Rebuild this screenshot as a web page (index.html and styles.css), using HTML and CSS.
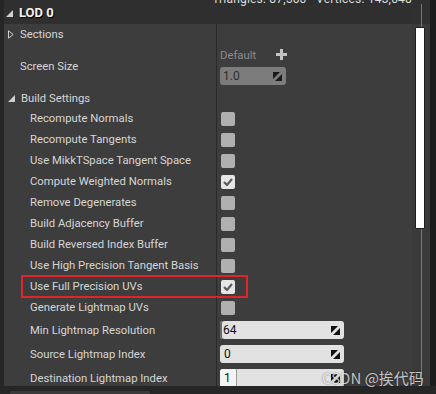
FILE: index.html
```html
<!DOCTYPE html>
<html lang="en">
<head>
  <meta charset="UTF-8" />
  <title>LOD 0 Details</title>
  <link rel="stylesheet" href="styles.css">
</head>
<body>

<div class="frame">
  <div class="panel">

    <!-- LOD header -->
    <div class="lod-header">
      <div class="lod-title">
        <svg class="tri" width="7" height="7" viewBox="0 0 7 7"><path d="M7 0 V7 H0 Z" fill="#d0d0d0"/></svg>
        <span>LOD 0</span>
      </div>
      <div class="lod-stats">Triangles: 87,500&nbsp;&nbsp;&nbsp;Vertices: 143,048</div>
    </div>

    <!-- Property rows -->
    <div class="rows">
      <div class="row row-sm">
        <div class="name top">
          <svg class="tri" width="6" height="9" viewBox="0 0 6 9"><path d="M0.5 0.8 L5.2 4.5 L0.5 8.2 Z" fill="none" stroke="#cfcfcf" stroke-width="1"/></svg>
          <span>Sections</span>
        </div>
        <div class="value"></div>
      </div>

      <div class="row row-tall">
        <div class="name top plain"><span>Screen Size</span></div>
        <div class="value stack">
          <div class="default-line">
            <span>Default</span>
            <svg class="plus" width="11" height="11" viewBox="0 0 11 11"><path d="M4 0 H7 V4 H11 V7 H7 V11 H4 V7 H0 V4 H4 Z" fill="#c4c4c4"/></svg>
          </div>
          <div class="num num-grey">
            <span>1.0</span>
            <svg class="grip" width="9" height="9" viewBox="0 0 9 9"><path d="M0 0 H7 L0 7 Z M9 2 V9 H2 Z" fill="#1a1a1a"/></svg>
          </div>
        </div>
      </div>

      <div class="row row-cat">
        <div class="name top">
          <svg class="tri" width="7" height="7" viewBox="0 0 7 7"><path d="M7 0 V7 H0 Z" fill="#cfcfcf"/></svg>
          <span>Build Settings</span>
        </div>
        <div class="value"></div>
      </div>

      <div class="row"><div class="name">Recompute Normals</div><div class="value"><span class="check"></span></div></div>
      <div class="row"><div class="name">Recompute Tangents</div><div class="value"><span class="check"></span></div></div>
      <div class="row"><div class="name">Use MikkTSpace Tangent Space</div><div class="value"><span class="check"></span></div></div>
      <div class="row"><div class="name">Compute Weighted Normals</div><div class="value"><span class="check on"><svg width="10" height="8" viewBox="0 0 10 8"><path d="M1 4 L4 7 L9 1" fill="none" stroke="#5c5c5c" stroke-width="2.2"/></svg></span></div></div>
      <div class="row"><div class="name">Remove Degenerates</div><div class="value"><span class="check"></span></div></div>
      <div class="row"><div class="name">Build Adjacency Buffer</div><div class="value"><span class="check"></span></div></div>
      <div class="row"><div class="name">Build Reversed Index Buffer</div><div class="value"><span class="check"></span></div></div>
      <div class="row"><div class="name">Use High Precision Tangent Basis</div><div class="value"><span class="check"></span></div></div>
      <div class="row marked">
        <div class="name">Use Full Precision UVs</div>
        <div class="value"><span class="check on"><svg width="10" height="8" viewBox="0 0 10 8"><path d="M1 4 L4 7 L9 1" fill="none" stroke="#5c5c5c" stroke-width="2.2"/></svg></span></div>
        <div class="highlight"></div>
      </div>
      <div class="row"><div class="name">Generate Lightmap UVs</div><div class="value"><span class="check"></span></div></div>

      <div class="row row-num">
        <div class="name">Min Lightmap Resolution</div>
        <div class="value">
          <div class="num num-light slider-edge">
            <span>64</span>
            <svg class="grip" width="9" height="9" viewBox="0 0 9 9"><path d="M0 0 H7 L0 7 Z M9 2 V9 H2 Z" fill="#111"/></svg>
          </div>
        </div>
      </div>
      <div class="row row-num">
        <div class="name">Source Lightmap Index</div>
        <div class="value">
          <div class="num num-light">
            <span>0</span>
            <svg class="grip" width="9" height="9" viewBox="0 0 9 9"><path d="M0 0 H7 L0 7 Z M9 2 V9 H2 Z" fill="#111"/></svg>
          </div>
        </div>
      </div>
      <div class="row row-num">
        <div class="name">Destination Lightmap Index</div>
        <div class="value">
          <div class="num num-light num-knob">
            <span class="knob">1</span>
            <svg class="grip" width="9" height="9" viewBox="0 0 9 9"><path d="M0 0 H7 L0 7 Z M9 2 V9 H2 Z" fill="#111"/></svg>
          </div>
        </div>
      </div>
    </div>
  </div>

  <!-- Scrollbar -->
  <div class="scrollbar">
    <div class="thumb"></div>
  </div>

  <div class="edge"></div>
</div>

<div class="bottom-strip"></div>

<div class="watermark">CSDN @挨代码</div>

</body>
</html>
```

FILE: styles.css
```css
* {
  margin: 0;
  padding: 0;
  box-sizing: border-box;
}

body {
  background-color: #262626;
  font-family: Roboto, "Noto Sans", sans-serif;
  font-size: 11.3px;
  color: #d6d6d6;
  width: 436px;
  height: 394px;
  overflow: hidden;
  position: relative;
}

.frame {
  display: flex;
  height: 386px;
  padding-left: 4px;
  overflow: hidden;
}

.panel {
  width: 408px;
  background-color: #3d3d3d;
  display: flex;
  flex-direction: column;
}

/* header */
.lod-header {
  flex-shrink: 0;
  height: 24px;
  background-color: #2f2f2f;
  display: flex;
  overflow: hidden;
}

.lod-title {
  width: 212px;
  display: flex;
  align-items: center;
  gap: 6px;
  padding-left: 2px;
  padding-top: 1px;
  font-size: 13px;
  font-weight: bold;
  color: #f2f2f2;
  text-shadow: 1px 1px 1px #000;
}

.lod-title .tri {
  margin-top: 2px;
}

.lod-stats {
  margin-top: -8px;
  padding-left: 16px;
  font-size: 12px;
  color: #dcdcdc;
  letter-spacing: 0.2px;
  white-space: nowrap;
}

/* rows */
.rows {
  flex-shrink: 0;
  display: flex;
  flex-direction: column;
}

.row {
  flex-shrink: 0;
  display: flex;
  height: 21px;
  position: relative;
}

.row-sm { height: 20px; }
.row-tall { height: 45px; }
.row-cat { height: 19px; }
.row-num { height: 24px; }

.name {
  width: 212px;
  display: flex;
  align-items: center;
  padding-left: 26px;
  white-space: nowrap;
}

.name.top {
  padding-left: 4px;
  gap: 6px;
}

.name.plain {
  padding-left: 16px;
}

.value {
  flex: 1;
  border-left: 1px solid #2a2a2a;
  display: flex;
  align-items: center;
  padding-left: 3px;
}

.value.stack {
  flex-direction: column;
  align-items: flex-start;
  justify-content: flex-start;
  padding-top: 5px;
  gap: 5px;
}

.default-line {
  display: flex;
  align-items: center;
  gap: 20px;
  color: #8c8c8c;
  height: 13px;
}

.plus {
  margin-top: -2px;
}

/* checkboxes */
.check {
  width: 14px;
  height: 14px;
  margin-left: 1px;
  border-radius: 2px;
  background-color: #b0b0b0;
  display: flex;
  align-items: center;
  justify-content: center;
}

.check.on {
  background-color: #e6e6e6;
}

/* number fields */
.num {
  height: 18px;
  border-radius: 3px;
  display: flex;
  align-items: center;
  justify-content: space-between;
  padding: 0 4px 0 4px;
  color: #111;
  font-size: 12px;
}

.num-grey {
  width: 66px;
  background-color: #7c7c7c;
  color: #2c2c2c;
  padding-left: 3px;
}

.num-light {
  width: 124px;
  background-color: #e2e2e2;
}

.slider-edge {
  padding-left: 3px;
  box-shadow: inset 2px 0 0 #6a6a6a;
}

.num-knob {
  padding-left: 0;
}

.knob {
  width: 17px;
  height: 18px;
  display: flex;
  align-items: center;
  padding-left: 4px;
  background-color: #f4f4f4;
  border-radius: 3px 0 0 3px;
  border-right: 1px solid #9a9a9a;
}

/* red annotation */
.highlight {
  position: absolute;
  left: 17px;
  top: -1px;
  width: 227px;
  height: 23px;
  border: 2px solid #e0242a;
  pointer-events: none;
}

/* scrollbar */
.scrollbar {
  width: 18px;
  background:
    linear-gradient(#777, #777) 9px 4px / 1px 100% no-repeat,
    linear-gradient(#303030 24px, #3a3a3a 24px);
  padding-top: 27px;
  padding-left: 3px;
}

.thumb {
  width: 10px;
  height: 202px;
  background-color: #fff;
  border: 1px solid #1f1f1f;
  border-radius: 1px;
}

.edge {
  width: 6px;
  background-color: #1c1c1c;
}

.bottom-strip {
  margin: 5px 0 0 10px;
  width: 140px;
  height: 3px;
  background-color: #3a3a3a;
}

.watermark {
  position: absolute;
  left: 322px;
  top: 367px;
  font-family: "Noto Sans CJK SC", sans-serif;
  font-size: 15px;
  color: rgba(255, 255, 255, 0.72);
  text-shadow: 0 0 2px rgba(0, 0, 0, 0.5);
  white-space: nowrap;
}
```
